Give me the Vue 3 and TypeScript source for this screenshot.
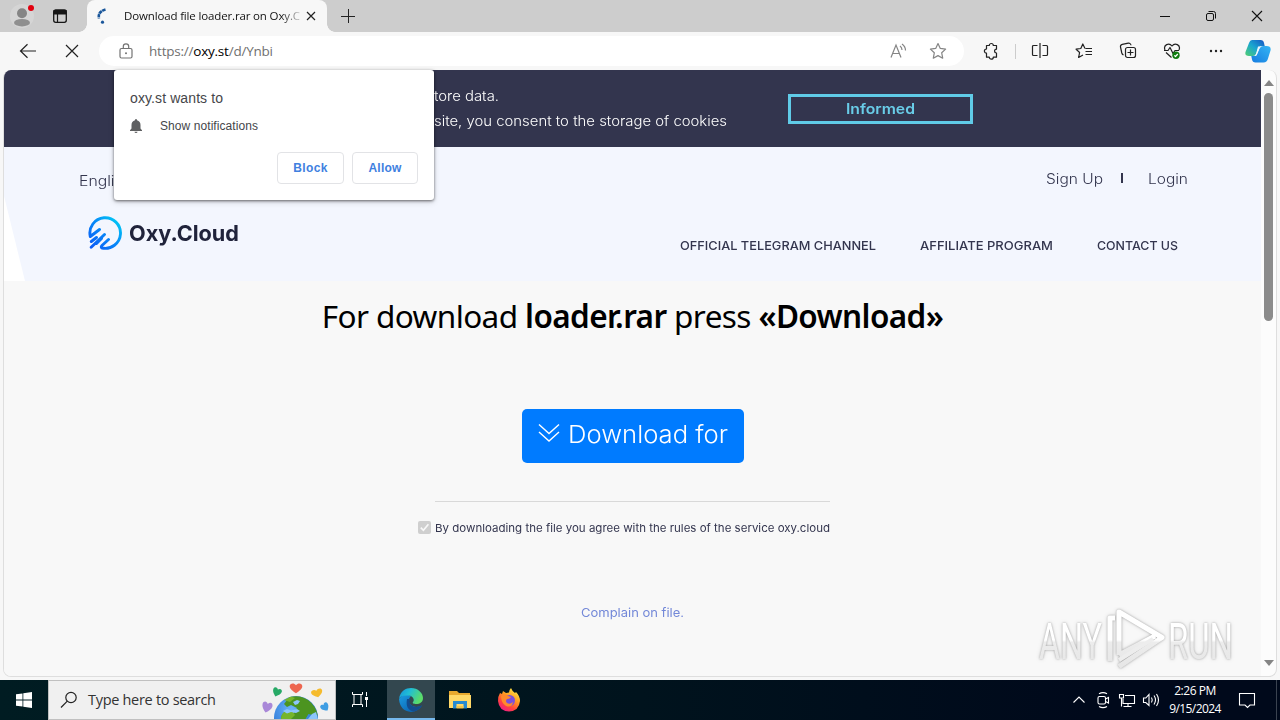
<script setup lang="ts">
interface NavItem {
  label: string
  width: number
}

interface FitBinding {
  value: number
  modifiers: Record<string, boolean>
}

const nav: NavItem[] = [
  { label: 'OFFICIAL TELEGRAM CHANNEL', width: 196 },
  { label: 'AFFILIATE PROGRAM', width: 133 },
  { label: 'CONTACT US', width: 81 },
]

/* Makes a label fill the given width: by tracking, or with .wide by widening its letters. */
const vFit = {
  mounted(el: HTMLElement, binding: FitBinding) {
    const natural = el.getBoundingClientRect().width
    if (binding.modifiers.wide) {
      const ratio = binding.value / natural
      el.style.display = 'inline-block'
      el.style.transformOrigin = '0 50%'
      el.style.transform = `scaleX(${ratio})`
      el.style.marginRight = `${binding.value - natural}px`
      return
    }
    const count = (el.textContent ?? '').length
    el.style.letterSpacing = `${(binding.value - natural) / Math.max(1, count - 1)}px`
  },
}
</script>

<template>
  <div class="screen">
    <header class="tabs">
      <svg class="avatar" width="30" height="32" viewBox="0 0 30 32">
        <circle cx="15" cy="16" r="12" fill="#d5d5d5" />
        <circle cx="15" cy="13.300" r="5" fill="#858585" />
        <ellipse cx="15" cy="22.700" rx="8" ry="3.700" fill="#8f8f8f" />
        <circle cx="24" cy="8" r="3" fill="#e2000f" />
      </svg>
      <svg class="space" width="16" height="16" viewBox="0 0 16 16">
        <rect x="1.700" y="2" width="12.600" height="12.300" rx="2" fill="none" stroke="#161616" stroke-width="1.300" />
        <path d="M2 2.500h12v3.500H2zM5.500 5v9" fill="#161616" stroke="#161616" stroke-width="1.200" />
      </svg>
      <div class="tab">
        <svg class="spin" width="16" height="20" viewBox="0 0 16 20">
          <path d="M9.500 3.500 C4 5 2 8 3 12.500" fill="none" stroke="#19569a" stroke-width="2.600" stroke-dasharray="3.500 .5" />
          <circle cx="6.500" cy="16.200" r="1.600" fill="#19569a" />
        </svg>
        <div class="tab-title"><span v-fit="176">Download file loader.rar on Oxy.C</span></div>
        <svg width="12" height="12" viewBox="0 0 12 12" class="x"><path d="M2 2l8 8M10 2l-8 8" stroke="#222" stroke-width="1.200" /></svg>
      </div>
      <svg class="plus" width="14" height="14" viewBox="0 0 14 14"><path d="M0 7.500h14M7.500 0v14" stroke="#222" /></svg>
      <div class="win">
        <svg width="12" height="12" viewBox="0 0 12 12"><path d="M1 6.500h10" stroke="#111" /></svg>
        <svg width="12" height="12" viewBox="0 0 12 12"><rect x="1.500" y="3.500" width="7" height="7" rx="1.500" fill="none" stroke="#111" /><path d="M3.500 1.500h5a2 2 0 0 1 2 2v5" fill="none" stroke="#111" /></svg>
        <svg width="12" height="12" viewBox="0 0 12 12"><path d="M1 1l10 10M11 1l-10 10" stroke="#111" stroke-width="1.100" /></svg>
      </div>
    </header>

    <div class="toolbar">
      <svg class="back" width="18" height="16" viewBox="0 0 18 16"><path d="M17 8H1.500M8.500 1.200L1.500 8l7 6.800" fill="none" stroke="#222" stroke-width="1.200" /></svg>
      <svg class="stop" width="14" height="14" viewBox="0 0 14 14"><path d="M1 1l12 12M13 1L1 13" stroke="#222" stroke-width="1.200" /></svg>
      <div class="address">
        <svg class="lock" width="14" height="16" viewBox="0 0 14 16"><rect x="1" y="5.500" width="12" height="9.500" rx="1.500" fill="none" stroke="#737373" stroke-width="1.200" /><path d="M4.300 5.500V3.500a2.700 2.700 0 0 1 5.400 0v2" fill="none" stroke="#737373" stroke-width="1.200" /><circle cx="7" cy="10.200" r="1" fill="#737373" /></svg>
        <span v-fit="124" class="url">https://<b>oxy.st</b>/d/Ynbi</span>
        <svg class="read" width="18" height="18" viewBox="0 0 18 18" fill="none" stroke="#858585" stroke-width="1.200"><path d="M2 15.500L7 3l5 12.500M3.700 11.500h6.600M11 4q2 1.500 2 4M13 2q3.500 2.500 3.500 6.500" /></svg>
        <svg width="18" height="18" viewBox="0 0 18 18" fill="none" stroke="#858585" stroke-width="1.200" stroke-linejoin="round"><path d="M9 1.500l2.300 4.900 5.300.7-3.900 3.700 1 5.400L9 13.600l-4.700 2.600 1-5.400L1.400 7.100l5.300-.7z" /></svg>
      </div>
      <div class="tools">
        <div class="cell"><svg class="puzzle" width="18" height="18" viewBox="0 0 18 18"><path d="M4.500 3.500h2.800a2 2 0 0 1 4 0h3.200v3.700a1.900 1.900 0 0 0 0 3.800v4.200h-3.200a2 2 0 0 1-4 0H4.500v-4a2.100 2.100 0 1 1 0-4.200z" /></svg></div>
        <i class="sep"></i>
        <div class="cell"><svg width="18" height="18" viewBox="0 0 18 18"><path d="M6.500 3.500h-4a1 1 0 0 0-1 1v8a1 1 0 0 0 1 1h4M11.500 3.500h4a1 1 0 0 1 1 1v8a1 1 0 0 1-1 1h-4M9 1v15" /></svg></div>
        <div class="cell"><svg width="18" height="18" viewBox="0 0 18 18"><path d="M10 6.500L7.800 2 5.800 6.500l-4.700.7 3.500 3.300-1 5L8 13M10.500 6.500H17M10.500 9.500H17M10.500 12.500H17" /></svg></div>
        <div class="cell"><svg width="18" height="18" viewBox="0 0 18 18"><rect x="6.500" y="5.500" width="10" height="10" rx="2" /><path d="M11.500 7.500v6M8.500 10.500h6M4.500 13A3 3 0 0 1 2.800 11L1.500 5A2.300 2.300 0 0 1 3.300 2.300l6-1.100A2.300 2.300 0 0 1 12 3.200" /></svg></div>
        <div class="cell"><svg width="18" height="18" viewBox="0 0 18 18"><path d="M2 8C0 3 6 0 9 4c3-4 9-1 7 4M3 10.500l5.500 5M1 8.500h4l2-3 3 6 2-3h4" /><circle cx="13" cy="13.200" r="3.700" fill="#107c10" stroke="none" /><path d="M11.300 13.300l1.200 1.200 2.300-2.500" stroke="#fff" /></svg></div>
        <div class="cell"><svg width="18" height="18" viewBox="0 0 18 18"><g fill="#222" stroke="none"><circle cx="4" cy="9" r="1.200" /><circle cx="9" cy="9" r="1.200" /><circle cx="14" cy="9" r="1.200" /></g></svg></div>
        <svg class="copilot" width="26" height="24" viewBox="0 0 26 24">
          <defs>
            <linearGradient id="cpa" x1="0" y1="1" x2="1" y2="0"><stop offset="0" stop-color="#52cf70" /><stop offset=".5" stop-color="#1aa6d0" /><stop offset="1" stop-color="#1753c4" /></linearGradient>
            <linearGradient id="cpb" x1="0" y1="1" x2="1" y2="0"><stop offset="0" stop-color="#167ce0" /><stop offset="1" stop-color="#35b5f4" /></linearGradient>
          </defs>
          <path d="M7 1h8.500q3 0 3.500 3l.7 3H17q-3.500 0-4.500 4l-1.500 4q-.7 2-3 2H4q-4.500 0-3.500-4L4 4q1-3 3-3z" fill="url(#cpa)" />
          <path d="M18 7h3.500q5 0 4 4.500l-2.500 8Q22 23.500 18.500 23.500h-8q-3 0-3.500-3L6.300 17H9q2.500 0 3.500-3l2-4.500Q15.500 7 18 7z" fill="url(#cpb)" />
          <path d="M13 7.500h3q-1.500 1-2 3l-2 5q-.5 1.500-2 1.500H9.500q1.300-1 1.800-3z" fill="#eef9ff" />
        </svg>
      </div>
    </div>

    <div class="frame">
      <main class="page">
        <section class="cookies">
          <div class="cookie-text">
            <p><span v-fit.wide="65">tore data.</span></p>
            <p><span v-fit.wide="293">site, you consent to the storage of cookies</span></p>
          </div>
          <button class="informed"><span v-fit.wide="69">Informed</span></button>
        </section>
        <section class="top">
          <svg class="wedge" width="21" height="134" viewBox="0 0 21 134"><path d="M0 49L21 134H0z" fill="#fff" /></svg>
          <div class="account">
            <span v-fit.wide="53" class="lang">English</span>
            <span v-fit.wide="57" class="signup">Sign Up</span>
            <i></i>
            <span v-fit.wide="40">Login</span>
          </div>
          <div class="brand-row">
            <svg width="34" height="34" viewBox="0 0 34 34">
              <defs><linearGradient id="lg" gradientUnits="userSpaceOnUse" x1="3" y1="31" x2="31" y2="3"><stop offset="0" stop-color="#0c5cf5" /><stop offset=".55" stop-color="#078cf8" /><stop offset="1" stop-color="#00cdf4" /></linearGradient></defs>
              <path d="M2.300 20.500A15.300 15.300 0 1 1 14 32Q12.500 31 14 29.500L20.500 23.500M2.300 20.500L11.500 13.500M3.300 25.500L8.500 21.500M3.200 31.300L16.500 18.500M8.500 27.500L13.500 22.500" fill="none" stroke="url(#lg)" stroke-width="2.900" stroke-linecap="round" />
            </svg>
            <span v-fit.wide="110" class="brand">Oxy.Cloud</span>
            <nav>
              <a v-for="n in nav" :key="n.label"><span v-fit.wide="n.width">{{ n.label }}</span></a>
            </nav>
          </div>
        </section>
        <section class="body">
          <h1><span v-fit="622">For download <b>loader.rar</b> press <b>«Download»</b></span></h1>
          <button class="download">
            <svg width="22" height="20" viewBox="0 0 22 20"><path d="M1 1.500l10 9 10-9M1 9l10 9 10-9" fill="none" stroke="#fff" stroke-width="1.400" /></svg>
            <span v-fit.wide="160">Download for</span>
          </button>
          <hr />
          <div class="agree">
            <svg width="13" height="13" viewBox="0 0 13 13"><rect width="13" height="13" rx="2" fill="#cfcfcf" /><path d="M2.800 6.700l2.600 2.600 5-6" fill="none" stroke="#f8f8f8" stroke-width="1.700" /></svg>
            <span v-fit.wide="395">By downloading the file you agree with the rules of the service oxy.cloud</span>
          </div>
          <p class="complain"><span v-fit.wide="103">Complain on file.</span></p>
        </section>
      </main>
      <aside class="scroll">
        <svg width="10" height="6" viewBox="0 0 10 6"><path d="M5 0l5 6H0z" fill="#858585" /></svg>
        <i></i>
        <svg width="10" height="6" viewBox="0 0 10 6"><path d="M0 0h10L5 6z" fill="#858585" /></svg>
      </aside>
    </div>

    <div class="popup">
      <p class="ask"><span v-fit="93">oxy.st wants to</span></p>
      <p class="perm">
        <svg width="12" height="14" viewBox="0 0 12 14"><path d="M6 0q1 0 1 1.300Q10.500 2.200 10.500 6v3.500L12 11.300V12H0v-.7L1.500 9.500V6Q1.500 2.200 5 1.300 5 0 6 0zM4.500 12.700h3Q7.500 14 6 14t-1.500-1.300z" fill="#5f6062" /></svg>
        <span v-fit="98">Show notifications</span>
      </p>
      <div class="choices">
        <button><span v-fit="34">Block</span></button>
        <button><span v-fit="33">Allow</span></button>
      </div>
    </div>

    <svg class="watermark" width="212" height="66" viewBox="0 0 212 66">
      <defs><linearGradient id="wm" gradientUnits="userSpaceOnUse" x1="0" y1="4" x2="0" y2="62"><stop offset="0" stop-color="#fff" /><stop offset=".5" stop-color="#fff" /><stop offset=".54" stop-color="#ececec" /><stop offset="1" stop-color="#e6e6e6" /></linearGradient></defs>
      <g class="mark">
        <text x="3" y="52" textLength="63" lengthAdjust="spacingAndGlyphs" fill="url(#wm)">ANY</text>
        <text x="132" y="52" textLength="65" lengthAdjust="spacingAndGlyphs" fill="url(#wm)">RUN</text>
        <path d="M74 54V11h5M83 48V5l43 25.500-43 29M83 48l36-19" fill="none" stroke="url(#wm)" stroke-width="5" stroke-linejoin="round" />
        <path d="M83 53l34-21" fill="none" stroke="#ededed" stroke-width="4" />
      </g>
    </svg>

    <footer class="taskbar">
      <div class="start"><svg width="16" height="16" viewBox="0 0 16 16" fill="#fff"><path d="M0 2.300L6.500 1.400v6.200H0zM7.300 1.300L16 0v7.600H7.300zM0 8.400h6.500v6.200L0 13.700zM7.300 8.400H16V16l-8.700-1.300z" /></svg></div>
      <div class="search">
        <svg class="lens" width="18" height="18" viewBox="0 0 18 18"><circle cx="11" cy="6.500" r="5.200" fill="none" stroke="#222" stroke-width="1.200" /><path d="M7.300 10.200L1 16.500" stroke="#222" stroke-width="1.200" /></svg>
        <span v-fit="128">Type here to search</span>
        <svg class="earth" width="74" height="38" viewBox="0 0 74 38">
          <defs>
            <path id="heart" d="M0 5.500C-3 3.500-6 1-6-1.800-6-5-2-5.800 0-3 2-5.800 6-5 6-1.800 6 1 3 3.500 0 5.500z" />
            <radialGradient id="globe" cx=".4" cy=".3" r=".8"><stop offset="0" stop-color="#6db4fa" /><stop offset=".65" stop-color="#2f7cd8" /><stop offset="1" stop-color="#154c96" /></radialGradient>
          </defs>
          <circle cx="37" cy="37" r="22" fill="url(#globe)" />
          <path d="M30 16.500Q40 13 49 19q8 6 9.500 15l-2 4-3-4-4-1-3 5H22q0-5 4-7l9 1 3-5-6-3-4 2-3-3z" fill="#4c9420" />
          <path d="M22 38q0-6 5-8l7 1 2 3-4 4zM25 19l7-3.500 4 1.500-5 4z" fill="#76b52b" />
          <path d="M24 30l4-2 4 1.500 6-1.500 3 2-4 2-5-1-4 1.500zM34 21l4-2 3 1-2 3-3 1zM49 38l4-5 4-2 2 7z" fill="#8cc6fb" />
          <use href="#heart" transform="translate(37 7) scale(1.05 .95)" fill="#ed6650" />
          <use href="#heart" transform="translate(18 11) rotate(20) scale(.75 .85)" fill="#27a966" />
          <use href="#heart" transform="translate(58 12) rotate(-15) scale(.95 .8)" fill="#f5bb2d" />
          <use href="#heart" transform="translate(8 26) rotate(15) scale(.85 1.05)" fill="#a988d8" />
          <use href="#heart" transform="translate(66 26) rotate(-35) scale(.7 .8)" fill="#3e9de3" />
        </svg>
      </div>
      <div class="task-view"><svg width="18" height="18" viewBox="0 0 18 18" fill="none" stroke="#fff"><path d="M1.500 1v2.500h10V1M1.500 16v-2.500h10V16M3 3.500v10M10 3.500v10M15.500 1v4M15.500 9v7" /><path d="M14 6h3v3h-3z" fill="#fff" stroke="none" /></svg></div>
      <div class="app active">
        <svg width="24" height="24" viewBox="0 0 24 24">
          <defs>
            <linearGradient id="ea" x1="0" y1="0" x2="1" y2=".4"><stop offset="0" stop-color="#1591db" /><stop offset=".45" stop-color="#20bdd6" /><stop offset="1" stop-color="#5bdc69" /></linearGradient>
            <linearGradient id="eb" x1="0" y1="0" x2="1" y2="1"><stop offset="0" stop-color="#1b9de2" /><stop offset="1" stop-color="#0755a5" /></linearGradient>
          </defs>
          <path d="M0 11Q5 4 12 8q-4 4-1 8 4 5 12 1.500Q19 24 12 24 1 23 0 11z" fill="url(#eb)" />
          <path d="M8 11q-2 11 7 12.500 5-1.500 8-6-7 3-11-.5-2.500-3-.5-6z" fill="#134c8d" />
          <path d="M0 11C1 3 7 0 12 0c7 0 12 5 12 10 0 4-3 6-7 6-2 0-4-.7-3-2 2-2 0-6-4-6.500C5 7 1 8 0 11z" fill="url(#ea)" />
        </svg>
      </div>
      <div class="app">
        <svg width="22" height="20" viewBox="0 0 22 20"><path d="M0 1h8l2 2h11v15H0z" fill="#e8a92e" /><path d="M0 5h22v13H0z" fill="#ffd867" /><path d="M4 11h14v7.500h-3.500V14h-7v4.500H4z" fill="#278bd0" /><path d="M7.500 16h7v2.500h-7z" fill="#f3c44b" /></svg>
      </div>
      <div class="app">
        <svg width="24" height="24" viewBox="0 0 24 24">
          <defs><linearGradient id="ff" x1=".8" y1="0" x2=".2" y2="1"><stop offset="0" stop-color="#fff04a" /><stop offset=".4" stop-color="#ff9b21" /><stop offset=".7" stop-color="#ff433d" /><stop offset="1" stop-color="#ed188f" /></linearGradient></defs>
          <path d="M3 5l2 1 1-3 3 2 3-.5Q12 2 14 0q1 3 4 5l1-1q4 4 4 9-1 10-11 10.500Q2 23 1 13q0-5 2-8z" fill="url(#ff)" />
          <circle cx="12.500" cy="12.500" r="5.500" fill="#7950dc" /><path d="M4 8q4-3 7 0l3 1q-1 2-4 2-2 2 0 4 3 2 6-1-1 6-7 4-5-3-5-10z" fill="#ff8a2b" />
        </svg>
      </div>
      <div class="tray">
        <svg width="24" height="20" viewBox="0 0 24 20"><path d="M6.500 12.500L12 7l5.500 5.500" /></svg>
        <svg width="24" height="20" viewBox="0 0 24 20"><rect x="7" y="6.500" width="7.500" height="7.500" rx="1.500" /><path d="M14.500 9l3-1.500v5.500l-3-1.500M8 3.800q4-2.300 8 0M8 16.500q4 2.300 8 0" /></svg>
        <svg width="24" height="20" viewBox="0 0 24 20"><path d="M10 5.500h9.500v8H8V9M8.500 16.500h8M13 13.500v3M4.500 4.500h4V8h-4zM6.500 8v8.500" /></svg>
        <svg width="24" height="20" viewBox="0 0 24 20"><path d="M4.500 8v4.500h2.300l3.200 3v-11L6.800 8zM12.500 7.500q1.500 2.500 0 5M15 5.500q3 4.500 0 9M17.500 4q4 6 0 12" /></svg>
        <div class="clock"><span v-fit="42">2:26 PM</span><span v-fit="52">9/15/2024</span></div>
        <svg class="note" width="18" height="18" viewBox="0 0 18 18"><path d="M1.500 2.500h15v11.500h-4.500L9.500 16.500 7 14H1.500z" /></svg>
        <i class="desk"></i>
      </div>
    </footer>
  </div>
</template>

<style>
html, body { margin: 0; overflow: hidden; }
</style>

<style scoped>
* { box-sizing: border-box; }
p, h1 { margin: 0; }
svg { display: block; flex: none; }
span { white-space: nowrap; flex: none; }
button { padding: 0; font: inherit; display: flex; align-items: center; justify-content: center; }
.screen { position: relative; width: 1280px; height: 720px; overflow: hidden; display: flex; flex-direction: column; background: #f7f7f7; font-family: "Open Sans", "Noto Sans", sans-serif; }
.tabs { height: 32px; flex: none; display: flex; align-items: center; background: #cdcdcd; }
.avatar { margin-left: 7px; }
.space { margin-left: 15px; }
.tab { position: relative; margin-left: 19px; width: 240px; height: 32px; flex: none; display: flex; align-items: center; background: #f7f7f7; border-radius: 8px 8px 0 0; }
.tab::before, .tab::after { content: ""; position: absolute; bottom: 0; width: 8px; height: 8px; }
.tab::before { left: -8px; background: radial-gradient(circle at 0 0, transparent 7.500px, #f7f7f7 8px); }
.tab::after { right: -8px; background: radial-gradient(circle at 100% 0, transparent 7.500px, #f7f7f7 8px); }
.spin { margin-left: 9px; }
.tab-title { margin-left: 12px; width: 178px; font-size: 11.500px; line-height: 20px; color: #111; mask-image: linear-gradient(90deg, #000 88%, rgba(0, 0, 0, .1)); }
.x { margin-left: 3px; }
.plus { margin-left: 14px; }
.win { margin-left: auto; display: flex; }
.win svg { margin: 0 17px; }
.toolbar { height: 38px; flex: none; display: flex; align-items: center; }
.back { margin-left: 19px; }
.stop { margin-left: 28px; }
.address { margin: 0 0 0 20px; width: 865px; height: 30px; flex: none; display: flex; align-items: center; background: #fff; border-radius: 15px; padding-right: 17px; }
.lock { margin-left: 20px; }
.url { margin-left: 16px; font-size: 13.500px; line-height: 20px; color: #707070; }
.url b { font-weight: 400; color: #000; }
.read { margin-left: auto; margin-right: 22px; }
.tools { margin-left: 5px; display: flex; align-items: center; }
.cell { width: 44px; display: flex; justify-content: center; }
.cell svg { fill: none; stroke: #222; stroke-width: 1.200; stroke-linejoin: round; }
.sep { width: 1px; height: 15px; margin: 0 2px; background: #ccc; }
.copilot { margin-left: 7px; }
.frame { margin: 0 3px 0; width: 1274px; height: 607px; flex: none; display: flex; border: 1px solid #dedede; border-top: 0; border-radius: 8px; overflow: hidden; background: #fcfcfc; }
.page { width: 1257px; flex: none; background: #f8f8f8; }
.cookies { height: 77px; display: flex; background: #33354e; padding-top: 13px; color: #fff; font: 400 14px/25px Inter, "Open Sans", sans-serif; }
.cookie-text { margin-left: 430px; width: 354px; font-weight: 300; }
.informed { margin-top: 11px; width: 185px; height: 30px; border: 3px solid #60cbe7; background: transparent; color: #69cde8; font-size: 14px; font-weight: 600; padding-bottom: 1px; }
.top { position: relative; height: 134px; background: #f3f6fe; color: #33354e; font-family: Inter, "Open Sans", sans-serif; }
.wedge { position: absolute; left: 0; top: 0; }
.account { height: 62px; display: flex; align-items: center; padding-right: 73px; font-size: 14px; font-weight: 300; }
.lang { margin: 4px 0 0 75px; }
.signup { margin-left: auto; }
.account i { width: 2px; height: 10px; margin: 0 25px 0 18px; background: #33354e; }
.brand-row { display: flex; align-items: center; height: 34px; margin: 7px 0 0 84px; }
.brand { margin-left: 7px; font-size: 22px; font-weight: 700; line-height: 30px; color: #20233b; }
nav { margin: 25px 0 0 auto; padding-right: 83px; display: flex; gap: 44px; font-size: 12px; line-height: 18px; font-weight: 500; }
.body { display: flex; flex-direction: column; align-items: center; color: #33354e; font-family: Inter, "Open Sans", sans-serif; }
h1 { margin-top: 13px; font: 400 31.500px/44px "Noto Sans", sans-serif; color: #000; }
h1 b { font-weight: 600; }
.download { margin: 71px 0 0 1px; width: 222px; height: 54px; border: 0; border-radius: 5px; background: #007bff; color: #fff; font-size: 24px; font-weight: 300; line-height: 54px; padding-bottom: 3px; gap: 8px; }
.download svg { margin-bottom: 3px; }
hr { margin: 38px 0 0; width: 395px; height: 1px; border: 0; background: #d9d9d9; }
.agree { margin: 17px 17px 0 0; display: flex; align-items: center; gap: 4px; font-size: 11px; line-height: 18px; }
.agree svg { margin-bottom: 2px; }
.complain { margin-top: 66px; font-size: 12px; line-height: 20px; color: #7388d8; }
.scroll { width: 15px; display: flex; flex-direction: column; align-items: center; padding: 10px 0 10px; }
.scroll i { width: 9px; height: 228px; margin: 7px 0 auto; border-radius: 5px; background: #8b8b8b; }
.popup { position: absolute; left: 114px; top: 70px; width: 320px; height: 130px; padding: 18px 16px 16px; background: #fff; border-radius: 3px; box-shadow: 0 1px 3px rgba(0, 0, 0, .55), 0 2px 6px rgba(0, 0, 0, .15); color: #45464a; font-family: "Liberation Sans", sans-serif; }
.ask { font-size: 14px; line-height: 20px; }
.perm { display: flex; align-items: center; gap: 18px; margin-top: 8px; font-size: 12px; line-height: 20px; }
.choices { margin-top: 16px; display: flex; justify-content: flex-end; gap: 8px; }
.choices button { width: 66px; height: 32px; border: 1px solid #e2e3e6; border-radius: 4px; background: #fff; color: #4080df; font-size: 12px; font-weight: 700; }
.choices button:first-child { width: 67px; }
.watermark { position: absolute; left: 1036px; top: 607px; }
.mark { filter: drop-shadow(0 0 1px rgba(0, 0, 0, .28)) drop-shadow(0 0 2px rgba(0, 0, 0, .12)); }
.mark text { font: 400 50px Roboto, sans-serif; }
.taskbar { height: 40px; margin-top: auto; flex: none; display: flex; background: linear-gradient(90deg, #001c22 0, #00131d 50%, #00091b 85%); color: #fff; }
.start { width: 48px; display: flex; align-items: center; justify-content: center; }
.search { width: 288px; display: flex; align-items: center; border: 1px solid #c0c0c0; background: #f0f0f0; color: #333; font-size: 14.500px; }
.lens { margin-left: 11px; }
.search span { margin-left: 10px; line-height: 24px; }
.earth { margin-left: auto; margin-right: 2px; }
.task-view { width: 51px; display: flex; align-items: center; justify-content: center; padding-right: 4px; }
.app { width: 48px; display: flex; align-items: center; justify-content: center; }
.app + .app { width: 49px; }
.active { background: #33474f; border-bottom: 2px solid #76b9ed; padding-top: 2px; }
.tray { margin-left: auto; display: flex; align-items: center; }
.tray svg { fill: none; stroke: #fff; stroke-width: 1.100; }
.clock { width: 64px; display: flex; flex-direction: column; align-items: center; font-size: 12px; line-height: 18px; }
.note { margin-left: 11px; }
.desk { width: 1px; height: 40px; margin: 0 3px 0 20px; background: #3a4350; }
</style>
